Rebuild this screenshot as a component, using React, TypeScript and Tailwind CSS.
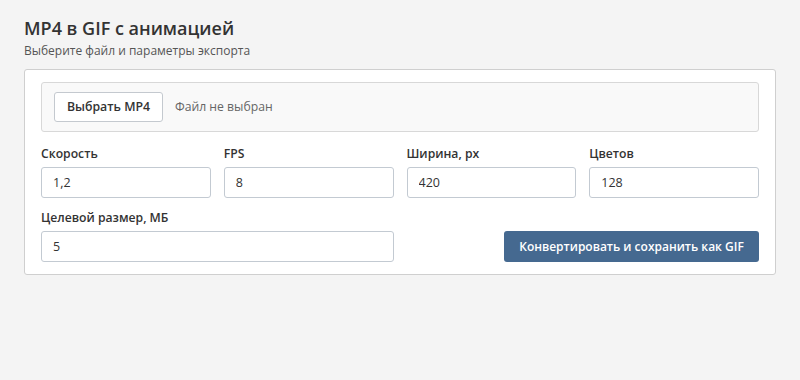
export default function App() {
  const fields = [
    { label: "Скорость", value: "1,2" },
    { label: "FPS", value: "8" },
    { label: "Ширина, px", value: "420" },
    { label: "Цветов", value: "128" },
  ];

  return (
    <div className="min-h-[380px] w-full bg-[#f4f4f4] px-6 pt-[14px] text-[#333] font-['Open_Sans',sans-serif]">
      <h1 className="text-[18px] font-semibold leading-[28px]">MP4 в GIF с анимацией</h1>
      <p className="mt-[1px] text-[12px] leading-[16px] text-[#555]">
        Выберите файл и параметры экспорта
      </p>

      <div className="mt-[10px] rounded-[3px] border border-[#cfcfcf] bg-white px-4 py-3">
        <div className="flex items-center gap-3 rounded-[3px] border border-[#d8d8d8] bg-[#f9f9f9] px-3 py-[9px]">
          <button className="h-[30px] w-[109px] rounded-[3px] border border-[#c4c9cf] bg-white text-[12.3px] font-semibold text-[#333]">
            Выбрать MP4
          </button>
          <span className="text-[12.2px] text-[#666]">Файл не выбран</span>
        </div>

        <div className="mt-3 grid grid-cols-4 gap-x-[13px]">
          {fields.map((f) => (
            <div key={f.label} className="flex flex-col">
              <label className="mb-[3px] text-[12.2px] font-semibold leading-[20px] text-[#333]">
                {f.label}
              </label>
              <input
                defaultValue={f.value}
                className="h-[31px] rounded-[3px] border border-[#c3cad2] bg-white px-[11px] text-[12.5px] text-[#333] outline-none"
              />
            </div>
          ))}
        </div>

        <div className="mt-[10px] grid grid-cols-4 items-end gap-x-[13px]">
          <div className="col-span-2 flex flex-col">
            <label className="mb-[3px] text-[12.2px] font-semibold leading-[20px] text-[#333]">
              Целевой размер, МБ
            </label>
            <input
              defaultValue="5"
              className="h-[31px] rounded-[3px] border border-[#c3cad2] bg-white px-[11px] text-[12.5px] text-[#333] outline-none"
            />
          </div>
          <div className="col-span-2 flex justify-end">
            <button className="h-[31px] w-[255px] rounded-[3px] bg-[#456990] text-[12px] font-semibold text-white">
              Конвертировать и сохранить как GIF
            </button>
          </div>
        </div>
      </div>
    </div>
  );
}
